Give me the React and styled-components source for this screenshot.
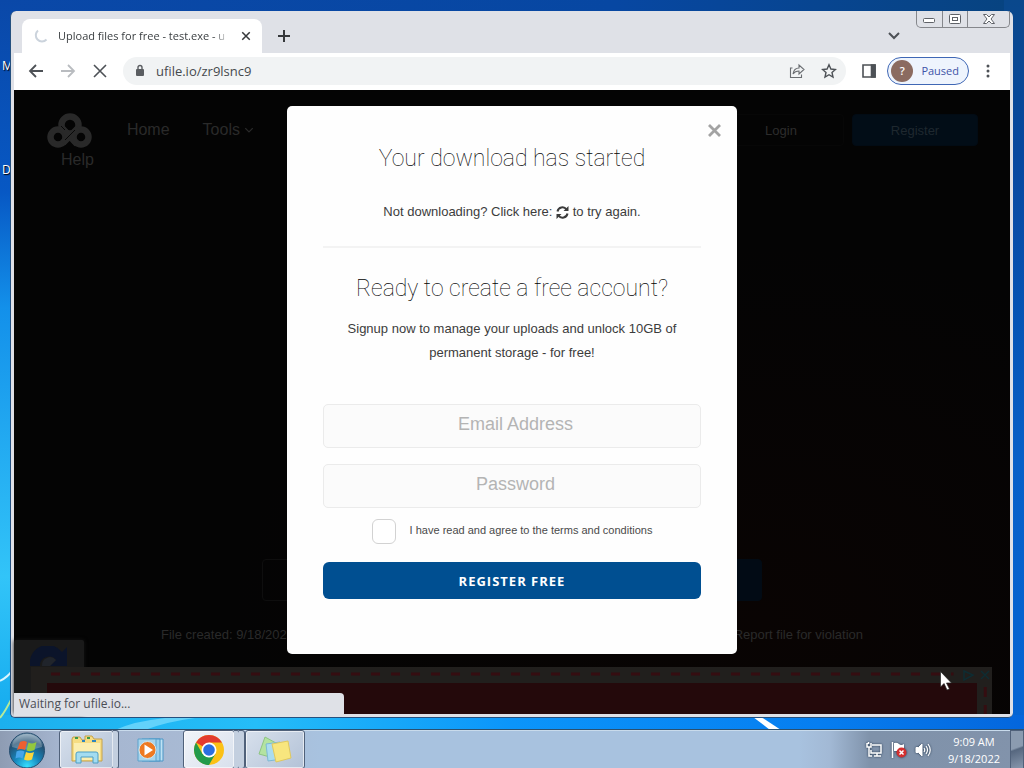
import React from "react";
import styled, { createGlobalStyle } from "styled-components";

const ui = `"Open Sans", "Noto Sans", sans-serif`;
const body = `"Liberation Sans", Arial, sans-serif`;

const GlobalStyle = createGlobalStyle`
  *, *::before, *::after { box-sizing: border-box; }
  body { margin: 0; font-family: ${body}; }
  button, input { font: inherit; margin: 0; }
  button { border: 0; padding: 0; background: none; cursor: pointer; color: inherit; }
  a { color: inherit; text-decoration: none; }
  svg { display: block; flex: none; }
`;

const Desktop = styled.div`
  position: relative;
  display: flex;
  flex-direction: column;
  min-height: 100vh;
  overflow: hidden;
  background: linear-gradient(90deg, #0a48a8, #0747a2 60%, #07437f);
`;

const Wallpaper = styled.svg`
  position: absolute;
  inset: 0;
  width: 100%;
  height: 100%;
`;

const ShortcutLabel = styled.span`
  position: absolute;
  left: 2px;
  top: ${(p) => p.$top}px;
  color: #fff;
  font: 12px/16px ${ui};
  text-shadow: 1px 1px 1px #000;
`;

const Workspace = styled.main`
  position: relative;
  flex: 1;
  display: flex;
  padding: 11px 11px 11px 10px;
`;

const Window = styled.section`
  flex: 1;
  min-width: 0;
  display: flex;
  flex-direction: column;
  padding: 0 3px 3px 3px;
  background: #dfe1e7;
  border: solid #24507f;
  border-width: 0 0 1px 1px;
  border-radius: 6px 6px 5px 5px;
`;

const TabStrip = styled.header`
  display: flex;
  height: 42px;
  padding: 8px 0 0 8px;
`;

const Tab = styled.div`
  display: flex;
  align-items: center;
  width: 240px;
  padding: 0 10px 0 12px;
  gap: 10px;
  background: #fff;
  border-radius: 8px 8px 0 0;
  font: 11px/16px ${ui};
  color: #3c4043;
`;

const TabTitle = styled.span`
  flex: 1;
  min-width: 0;
  white-space: nowrap;
  mask-image: linear-gradient(90deg, #000 90%, transparent);
`;

const IconButton = styled.button`
  display: grid;
  place-items: center;
  width: ${(p) => p.$w || 32}px;
  height: ${(p) => p.$h || 28}px;
  color: ${(p) => p.$color || "#4d5156"};
`;

const Spacer = styled.div`
  flex: 1;
`;

const StripButtons = styled.div`
  display: flex;
  align-items: center;
  padding: 0 ${(p) => p.$right || 0}px 0 ${(p) => p.$left || 0}px;
`;

const Caption = styled.div`
  display: flex;
  height: 17px;
  margin-top: -8px;
  border: 1px solid #85878c;
  border-top: 0;
  border-radius: 0 0 5px 5px;
`;

const CaptionButton = styled.button`
  display: grid;
  place-items: center;
  width: ${(p) => p.$w}px;
  & + & { border-left: 1px solid #85878c; }
`;

const Toolbar = styled.div`
  display: flex;
  align-items: center;
  height: 37px;
  padding: 0 6px 2px 6px;
  background: #fff;
`;

const AddressBar = styled.div`
  flex: 1;
  display: flex;
  align-items: center;
  height: 28px;
  margin: 0 7px;
  padding: 0 1px 0 10px;
  background: #f1f3f4;
  border-radius: 14px;
`;

const Address = styled.input`
  flex: 1;
  min-width: 0;
  padding: 0 0 0 9px;
  border: 0;
  outline: 0;
  background: transparent;
  color: #45494d;
  font: 13px/20px ${ui};
`;

const ProfileChip = styled.button`
  display: flex;
  align-items: center;
  height: 28px;
  padding: 0 9px 0 3px;
  gap: 8px;
  margin: 0 3px 0 2px;
  border: 1px solid #3f67b5;
  border-radius: 14px;
  background: #eef4fd;
  color: #4053a8;
  font: 11px/16px ${ui};
`;

const Avatar = styled.span`
  display: grid;
  place-items: center;
  width: 22px;
  height: 22px;
  border-radius: 50%;
  background: #8b6b60;
  color: #fff;
  font-weight: 600;
`;

const Page = styled.div`
  position: relative;
  flex: 1;
  display: flex;
  flex-direction: column;
  min-height: 624px;
  background: radial-gradient(ellipse at 75% 85%, #090403, #040404 50%);
  color: #2a2a2a;
`;

const SiteHeader = styled.header`
  display: flex;
  align-items: flex-start;
  padding: 23px 32px 0 33px;
`;

const SiteNav = styled.nav`
  display: grid;
  grid-template-columns: auto auto auto;
  column-gap: 33px;
  font-size: 16px;
  line-height: 20px;
`;

const NavLink = styled.a`
  display: flex;
  align-items: center;
  gap: 4px;
  align-self: start;
  padding-top: ${(p) => (p.$wrapped ? 1 : 7)}px;
  padding-left: ${(p) => (p.$wrapped ? 14 : 0)}px;
`;

const HeaderButton = styled.a`
  width: 126px;
  height: 32px;
  margin: 1px 0 0 ${(p) => (p.$primary ? 8 : 0)}px;
  text-align: center;
  font-size: 13px;
  line-height: 31px;
  border-radius: 4px;
  border: 1px solid ${(p) => (p.$primary ? "#020b14" : "#070707")};
  background: ${(p) => (p.$primary ? "#020d17" : "transparent")};
  color: ${(p) => (p.$primary ? "#1f282f" : "#2d2d2d")};
`;

const FileActions = styled.div`
  display: flex;
  justify-content: space-between;
  width: 500px;
  align-self: center;
  margin-bottom: 24px;
`;

const FileButton = styled.button`
  width: 200px;
  height: 42px;
  border: 1px solid ${(p) => (p.$primary ? "#020b14" : "#0e0e0e")};
  border-radius: 4px;
  background: ${(p) => (p.$primary ? "#020b15" : "transparent")};
`;

const FileMeta = styled.div`
  display: flex;
  justify-content: space-between;
  width: 702px;
  align-self: center;
  margin-bottom: 22px;
  font-size: 13px;
  line-height: 20px;
`;

const Advert = styled.aside`
  position: relative;
  height: 47px;
  margin: 0 18px 0 17px;
  padding: 16px 15px 0 16px;
  background: #211f1d;
  display: flex;
`;

const AdvertFill = styled.div`
  flex: 1;
  background: #24090b;
`;

const AdvertDashes = styled.svg`
  position: absolute;
  inset: 0;
  width: 100%;
  height: 100%;
`;

const AdChoices = styled.svg`
  position: absolute;
  right: 2px;
  top: 2px;
`;

const CaptchaBadge = styled.div`
  position: absolute;
  left: 0;
  bottom: 0;
  width: 70px;
  height: 74px;
  padding: 6px 0 0 16px;
  background: #1a1a1a;
  border-radius: 2px;
  box-shadow: 0 0 4px #151515;
`;

const StatusBubble = styled.div`
  position: absolute;
  left: 0;
  bottom: -2px;
  width: 330px;
  height: 23px;
  padding-left: 5px;
  background: #dfe1e7;
  border-radius: 0 4px 0 0;
  color: #4b4e55;
  font: 12px/22px ${ui};
`;

const Overlay = styled.div`
  position: absolute;
  inset: 0;
  display: flex;
  justify-content: center;
  align-items: flex-start;
  padding: 16px;
`;

const Modal = styled.div`
  position: relative;
  width: 450px;
  min-height: 548px;
  padding: 36px 36px 55px;
  background: #fefefe;
  border-radius: 5px;
  text-align: center;
  color: #3c3c3c;
`;

const CloseModal = styled.button`
  position: absolute;
  top: 18px;
  right: 16px;
`;

const Title = styled.h2`
  margin: 0;
  font: 100 23px/34px Roboto, sans-serif;
  color: #000;
`;

const Copy = styled.p`
  margin: ${(p) => p.$top}px 0 0;
  font-size: 13px;
  line-height: 24px;
`;

const RetryButton = styled.button`
  display: inline-block;
  vertical-align: -3px;
`;

const Divider = styled.hr`
  height: 2px;
  margin: 22px 0 24px;
  border: 0;
  background: #f3f3f3;
`;

const SignupForm = styled.form`
  display: flex;
  flex-direction: column;
  margin-top: 39px;
`;

const Field = styled.input`
  width: 100%;
  height: 44px;
  margin-bottom: 16px;
  padding: 0 0 3px 7px;
  border: 1px solid #ebebeb;
  border-radius: 5px;
  background: #fbfbfb;
  text-align: center;
  font-size: 18px;
  outline: 0;
  &::placeholder { color: #b4b4b4; opacity: 1; }
`;

const Terms = styled.label`
  display: flex;
  justify-content: center;
  gap: 14px;
  margin-top: -5px;
  font-size: 11px;
  line-height: 22px;
  color: #4a4a4a;
`;

const Check = styled.input`
  appearance: none;
  width: 24px;
  height: 25px;
  border: 1px solid #d2d2d2;
  border-radius: 6px;
  background: #fff;
`;

const Submit = styled.button`
  height: 37px;
  margin-top: 18px;
  border-radius: 6px;
  background: #004f91;
  color: #fff;
  font: 700 13px/36px "Open Sans", sans-serif;
  letter-spacing: 1px;
`;

const Pointer = styled.svg`
  position: absolute;
  right: 72px;
  bottom: 38px;
`;

const Taskbar = styled.footer`
  position: relative;
  display: flex;
  height: 40px;
  padding-left: 8px;
  border-top: 1px solid #2b506f;
  box-shadow: inset 0 1px 0 #c9dbec;
  background: linear-gradient(90deg, #8e9cb3 0, #a5b5cf 60px, #a9bbd5 230px, #a8c2df 320px, #a8c2df 78%, #a2b9d5 81%, #7f92aa 85%, #8293ab);
`;

const StartButton = styled.button`
  width: 38px;
  margin-right: 13px;
`;

const TaskButton = styled.button`
  display: grid;
  place-items: center;
  width: ${(p) => p.$w}px;
  border: 1px solid ${(p) => (p.$open ? "#50617a" : "transparent")};
  border-radius: 3px;
  box-shadow: ${(p) => (p.$open ? "inset 0 0 0 1px rgba(255,255,255,.6)" : "none")};
  background: ${(p) => (p.$active ? "linear-gradient(135deg,#f1f4f9,#d8e0ec)" : p.$open ? "linear-gradient(135deg,#d7e0ec,#b3c2d7)" : "transparent")};
`;

const StackEdge = styled.span`
  width: 6px;
  margin: 0 0 0 -1px;
  border: solid #50617a;
  border-width: 1px 1px 1px 0;
  border-radius: 0 3px 3px 0;
  background: #c3cfdf;
`;

const Tray = styled.div`
  display: flex;
  align-items: center;
  gap: 8px;
  margin-left: auto;
`;

const TrayIcon = styled.svg`
  filter: drop-shadow(0 0 1px #22364c);
`;

const Clock = styled.time`
  margin: 0 2px 0 8px;
  text-align: center;
  color: #fff;
  font: 11px/17px ${ui};
  span { display: block; }
`;

const ShowDesktop = styled.button`
  align-self: stretch;
  width: 14px;
  border: 1px solid #50617a;
  background: linear-gradient(160deg, #8b9bb0 45%, #56677f 50%, #8797ad);
`;

const Stroke = ({ s = 16, w = 2, d, children }) => (
  <svg width={s} height={s} viewBox="0 0 16 16" fill="none" stroke="currentColor" strokeWidth={w}>
    {d && <path d={d} />}
    {children}
  </svg>
);

const Logo = () => (
  <svg width="46" height="36" viewBox="0 0 46 36" fill="none" stroke="#292929" strokeWidth="6.5">
    <circle cx="23" cy="12" r="8.5" />
    <circle cx="11" cy="24" r="7.5" />
    <circle cx="34" cy="24" r="7.5" />
    <path d="M15 15L30 31M31 15L16 30" />
    <path d="M14 13l4 4M28 17l-10 10" stroke="#080808" strokeWidth="1" />
  </svg>
);

const StartOrb = () => (
  <svg width="38" height="38" viewBox="0 0 38 38">
    <defs>
      <radialGradient id="orb" cx=".5" cy=".95" r=".95">
        <stop offset="0" stopColor="#35e0ff" />
        <stop offset=".4" stopColor="#1684ba" />
        <stop offset=".75" stopColor="#245071" />
        <stop offset="1" stopColor="#8ba9bd" />
      </radialGradient>
    </defs>
    <circle cx="19" cy="19.5" r="17.5" fill="url(#orb)" stroke="#264e70" />
    <path d="M4 16a15 13 0 0 1 30 0q-15 5-30 0z" fill="#fff" opacity=".25" />
    <path d="M12 11q4-2 7 0l-2 8q-4-2-8 0z" fill="#ed6031" />
    <path d="M20.500 11.500q4 2 8-.5l-2 8q-4 2-8 .5z" fill="#93c83e" />
    <path d="M8.500 20.500q4-2 8 0l-2 7q-3-2-7 0z" fill="#45a5ea" />
    <path d="M18 21q4 2 8 0l-2 7.500q-4 2-8 0z" fill="#fbd53c" />
  </svg>
);

const ExplorerIcon = () => (
  <svg width="34" height="32" viewBox="0 0 34 32">
    <path d="M3 3h7l2 3h3V2h7l2 3h8v22H2V5z" fill="#f6dd83" stroke="#c4a14b" />
    <path d="M4 9h26v17H4z" fill="#fbeeb0" />
    <path d="M5 4h3M17 4h3" stroke="#3c9a4a" strokeWidth="2" />
    <path d="M12 7h3M22 7h4" stroke="#2f86bf" strokeWidth="2" />
    <path d="M6 29V20q0-2 2-2h18q2 0 2 2v9h-5v-6H11v6z" fill="#a3dcf1" stroke="#4d9ec5" />
  </svg>
);

const PlayerIcon = () => (
  <svg width="28" height="28" viewBox="0 0 28 28">
    <path d="M12 3h14v22H12z" fill="#bfe2f4" stroke="#4b96c6" />
    <path d="M5 3h18v22H5z" fill="#9ad0ee" stroke="#4b96c6" />
    <path d="M1 3h18v22H1z" fill="#a8d5ed" stroke="#5ba2cc" />
    <circle cx="10.500" cy="14" r="8.500" fill="#ee7a22" stroke="#d5e7ee" />
    <path d="M7.500 8.500v11l8.500-5.500z" fill="#fff" />
  </svg>
);

const ChromeIcon = () => (
  <svg width="32" height="32" viewBox="0 0 32 32">
    <circle cx="16" cy="16" r="15" fill="#fbc116" />
    <path d="M16 16L3 8.500A15 15 0 0 1 29 8.500H16z" fill="#e33b2e" />
    <path d="M3 8.500L9.500 20 16 23l-3 7.700A15 15 0 0 1 3 8.500z" fill="#229a4b" />
    <path d="M9.500 19.800L16 23l6.500-3.200L16 31q-2 0-3-.3z" fill="#229a4b" />
    <circle cx="16" cy="16" r="7.500" fill="#fff" />
    <circle cx="16" cy="16" r="5.800" fill="#2b6ee0" />
  </svg>
);

const NotesIcon = () => (
  <svg width="34" height="28" viewBox="0 0 34 28">
    <path d="M7 1l11 6-6 14L1 18z" fill="#b4e3a0" stroke="#8ec584" />
    <path d="M8 8l14-2 2 17-14 2z" fill="#aadcf0" stroke="#7db9d4" />
    <path d="M14 8l16-3 3 17-15 4z" fill="#f8e67e" stroke="#dfc860" />
  </svg>
);

export default function App() {
  return (
    <Desktop>
      <GlobalStyle />
      <Wallpaper viewBox="0 0 1024 768" preserveAspectRatio="none" aria-hidden="true">
        <defs>
          <linearGradient id="left" x2="0" y2="1">
            <stop offset="0" stopColor="#0a48a8" />
            <stop offset=".25" stopColor="#0758c4" />
            <stop offset=".4" stopColor="#1390ea" />
            <stop offset=".75" stopColor="#32c4f8" />
            <stop offset=".95" stopColor="#13a9ee" />
          </linearGradient>
          <linearGradient id="right" x2="0" y2="1">
            <stop offset="0" stopColor="#0a488c" />
            <stop offset=".2" stopColor="#07489f" />
            <stop offset=".6" stopColor="#0860c8" />
            <stop offset="1" stopColor="#0466d6" />
          </linearGradient>
          <linearGradient id="floor">
            <stop offset="0" stopColor="#1cb0ee" />
            <stop offset=".25" stopColor="#25bdf8" />
            <stop offset=".5" stopColor="#0b95fa" />
            <stop offset=".8" stopColor="#067ef0" />
            <stop offset="1" stopColor="#0466dc" />
          </linearGradient>
        </defs>
        <path d="M0 0h20v768H0z" fill="url(#left)" />
        <path d="M1004 0h20v768h-20z" fill="url(#right)" />
        <path d="M0 714h1024v20H0z" fill="url(#floor)" />
        <path d="M0 680q8-4 12-10" stroke="#d9f5ff" strokeWidth="2" fill="none" />
        <path d="M0 717q5-6 12-20" stroke="#b5ea9a" strokeWidth="2" fill="none" />
        <path d="M753 716l8 0 20 13h-11z" fill="#fff" />
        <path d="M115 729q20-9 50-12h30q-30 4-50 12z" fill="#63d2fa" />
      </Wallpaper>
      <ShortcutLabel $top={58}>M</ShortcutLabel>
      <ShortcutLabel $top={162}>D</ShortcutLabel>

      <Workspace>
        <Window aria-label="Browser">
          <TabStrip>
            <Tab>
              <svg width="14" height="14" viewBox="0 0 14 14" fill="none" stroke="#cbd3dc" strokeWidth="2">
                <path d="M4 1.500A6.200 6.200 0 1 0 12.500 10.500" />
              </svg>
              <TabTitle>Upload files for free - test.exe - u</TabTitle>
              <IconButton $w={12} aria-label="Close tab" $color="#36383b"><Stroke s={12} d="M3 3l10 10M13 3L3 13" /></IconButton>
            </Tab>
            <StripButtons $left={6}>
              <IconButton aria-label="New tab" $color="#36383b"><Stroke d="M8 2v12M2 8h12" /></IconButton>
            </StripButtons>
            <Spacer />
            <StripButtons $right={6}>
              <IconButton aria-label="Search tabs"><Stroke d="M3 5l5 5 5-5" /></IconButton>
            </StripButtons>
            <Caption>
              <CaptionButton $w={25} aria-label="Minimize">
                <svg width="13" height="7"><rect x=".5" y="2.500" width="11" height="4" rx="1" fill="#fff" stroke="#5f6268" /></svg>
              </CaptionButton>
              <CaptionButton $w={25} aria-label="Maximize">
                <svg width="12" height="10" fill="#fff" stroke="#5f6268"><rect x=".5" y=".5" width="11" height="9" rx="1" /><rect x="3.500" y="3.500" width="5" height="3" /></svg>
              </CaptionButton>
              <CaptionButton $w={42} aria-label="Close">
                <svg width="12" height="10" viewBox="0 0 12 10" fill="#fff" stroke="#5f6268"><path d="M.5.500h3L6 3 8.500.500h3L8 5l3.500 4.500h-3L6 7 3.500 9.500h-3L4 5z" /></svg>
              </CaptionButton>
            </Caption>
          </TabStrip>

          <Toolbar>
            <IconButton aria-label="Back"><Stroke w={1.8} d="M15 8H2M8 2L2 8l6 6" /></IconButton>
            <IconButton aria-label="Forward" $color="#b9bcc0"><Stroke w={1.8} d="M1 8h13M8 2l6 6-6 6" /></IconButton>
            <IconButton aria-label="Stop loading"><Stroke w={1.6} d="M2 2l12 12M14 2L2 14" /></IconButton>
            <AddressBar>
              <svg width="14" height="14" viewBox="0 0 14 14" fill="#5a5d61"><rect x="3" y="5" width="8" height="7" rx="1" /><path d="M5 5V3.500a2 2 0 0 1 4 0V5" fill="none" stroke="#5a5d61" strokeWidth="1.400" /></svg>
              <Address aria-label="Address" defaultValue="ufile.io/zr9lsnc9" />
              <IconButton aria-label="Share" $color="#6a6d71">
                <Stroke w={1.1} d="M3.500 5H1.500v9.500h11V11.500M4 11q1-6 6-6V2l5 4.500-5 4.500V8q-4 0-6 3z" />
              </IconButton>
              <IconButton aria-label="Bookmark">
                <Stroke w={1.4} d="M8 1.800l1.900 4.200 4.500.5-3.400 3 1 4.500L8 11.700 4 14l1-4.500-3.400-3 4.500-.5z" />
              </IconButton>
            </AddressBar>
            <IconButton aria-label="Side panel">
              <Stroke w={1.6} d="M2 2h12v12H2z"><path d="M10.500 2H14v12h-3.500z" fill="currentColor" /></Stroke>
            </IconButton>
            <ProfileChip><Avatar>?</Avatar>Paused</ProfileChip>
            <IconButton aria-label="Menu">
              <Stroke><g fill="currentColor" stroke="none"><circle cx="8" cy="3" r="1.500" /><circle cx="8" cy="8" r="1.500" /><circle cx="8" cy="13" r="1.500" /></g></Stroke>
            </IconButton>
          </Toolbar>

          <Page>
            <SiteHeader>
              <SiteNav>
                <a href="#home" aria-label="Ufile"><Logo /></a>
                <NavLink href="#home">Home</NavLink>
                <NavLink href="#tools">Tools <Stroke s={10} w={2} d="M2 5l6 6 6-6" /></NavLink>
                <NavLink href="#help" $wrapped>Help</NavLink>
              </SiteNav>
              <Spacer />
              <HeaderButton href="#login">Login</HeaderButton>
              <HeaderButton href="#register" $primary>Register</HeaderButton>
            </SiteHeader>
            <Spacer />
            <FileActions>
              <FileButton aria-label="Copy link" />
              <FileButton $primary aria-label="Download" />
            </FileActions>
            <FileMeta>
              <span>File created: 9/18/2022</span>
              <a href="#report">Report file for violation</a>
            </FileMeta>
            <CaptchaBadge>
              <svg width="40" height="40" viewBox="0 0 40 40">
                <path d="M0 20a18 18 0 0 1 32-14l5-5v19H20l6-6a9 9 0 0 0-16 6z" fill="#0b142a" />
                <path d="M12 20a8 8 0 0 1 14-6l-6 6z" fill="#20242b" />
              </svg>
            </CaptchaBadge>
            <Advert>
              <AdvertFill />
              <AdvertDashes fill="none" stroke="#350d11" strokeWidth="3">
                <line x1="20" y1="7" x2="96%" y2="7" strokeDasharray="9 11" />
                <line x1="99.300%" y1="20" x2="99.300%" y2="47" strokeDasharray="10 8" />
              </AdvertDashes>
              <AdChoices width="28" height="13" fill="none" stroke="#0e2c32" strokeWidth="1.500"><path d="M2 2v9l9-5zM19 2l8 8M27 2l-8 8" /></AdChoices>
            </Advert>

            <Overlay>
              <Modal role="dialog" aria-labelledby="download-title">
                <CloseModal aria-label="Close">
                  <svg width="13" height="13" viewBox="0 0 13 13" stroke="#a3a3a3" strokeWidth="2.800"><path d="M1 1l11 11M12 1L1 12" /></svg>
                </CloseModal>
                <Title id="download-title">Your download has started</Title>
                <Copy $top={24}>
                  Not downloading? Click here:{" "}
                  <RetryButton aria-label="Retry download">
                    <svg width="13" height="13" viewBox="0 0 13 13" fill="none" stroke="#3c3c3c" strokeWidth="2">
                      <path d="M1.500 5.500a5 5 0 0 1 9-2M11.500 7.500a5 5 0 0 1-9 2" />
                      <path d="M12.500 0v5h-5zM.5 13V8h5z" fill="#3c3c3c" stroke="none" />
                    </svg>
                  </RetryButton>{" "}
                  to try again.
                </Copy>
                <Divider />
                <Title>Ready to create a free account?</Title>
                <Copy $top={11}>Signup now to manage your uploads and unlock 10GB of permanent storage - for free!</Copy>
                <SignupForm>
                  <Field type="email" placeholder="Email Address" aria-label="Email Address" />
                  <Field type="password" placeholder="Password" aria-label="Password" />
                  <Terms><Check type="checkbox" />I have read and agree to the terms and conditions</Terms>
                  <Submit type="button">REGISTER FREE</Submit>
                </SignupForm>
              </Modal>
            </Overlay>
            <StatusBubble>Waiting for ufile.io...</StatusBubble>
          </Page>
        </Window>
        <Pointer width="12" height="20" viewBox="0 0 12 20">
          <path d="M.5.500v15.500l3.500-3.500 3 6.500 2.500-1-3-6h5z" fill="#fff" stroke="#222" strokeWidth=".7" />
        </Pointer>
      </Workspace>

      <Taskbar>
        <StartButton aria-label="Start"><StartOrb /></StartButton>
        <TaskButton $w={55} $open aria-label="File Explorer"><ExplorerIcon /></TaskButton>
        <StackEdge />
        <TaskButton $w={64} aria-label="Media Player"><PlayerIcon /></TaskButton>
        <TaskButton $w={52} $open $active aria-label="Chrome"><ChromeIcon /></TaskButton>
        <StackEdge />
        <StackEdge />
        <TaskButton $w={60} $open aria-label="Sticky Notes"><NotesIcon /></TaskButton>
        <Tray>
          <TrayIcon width="17" height="16" viewBox="0 0 17 16" fill="none" stroke="#fff" strokeWidth="1.500">
            <path d="M6 3h9v8H5V8M8 14h7M11 11v3M1 1v4h4V1M3 5v9h3M2.500 0v2" />
          </TrayIcon>
          <TrayIcon width="16" height="16" viewBox="0 0 16 16">
            <path d="M1.500 0v16" stroke="#fff" strokeWidth="1.500" />
            <path d="M3 1q3-1 5 1t5 0v7H3z" fill="#fff" />
            <circle cx="10.500" cy="10.500" r="5" fill="#d32f2f" />
            <path d="M8.500 8.500l4 4M12.500 8.500l-4 4" stroke="#fff" strokeWidth="1.500" />
          </TrayIcon>
          <TrayIcon width="17" height="16" viewBox="0 0 17 16" fill="none" stroke="#fff">
            <path d="M1 5.500h2.500L7 2v12L3.500 10.500H1z" fill="#fff" />
            <path d="M9 6q1.500 2 0 4M11 4q3 4 0 8M13 2q4.500 6 0 12" strokeWidth="1.200" />
          </TrayIcon>
          <Clock><span>9:09 AM</span><span>9/18/2022</span></Clock>
          <ShowDesktop aria-label="Show desktop" />
        </Tray>
      </Taskbar>
    </Desktop>
  );
}
